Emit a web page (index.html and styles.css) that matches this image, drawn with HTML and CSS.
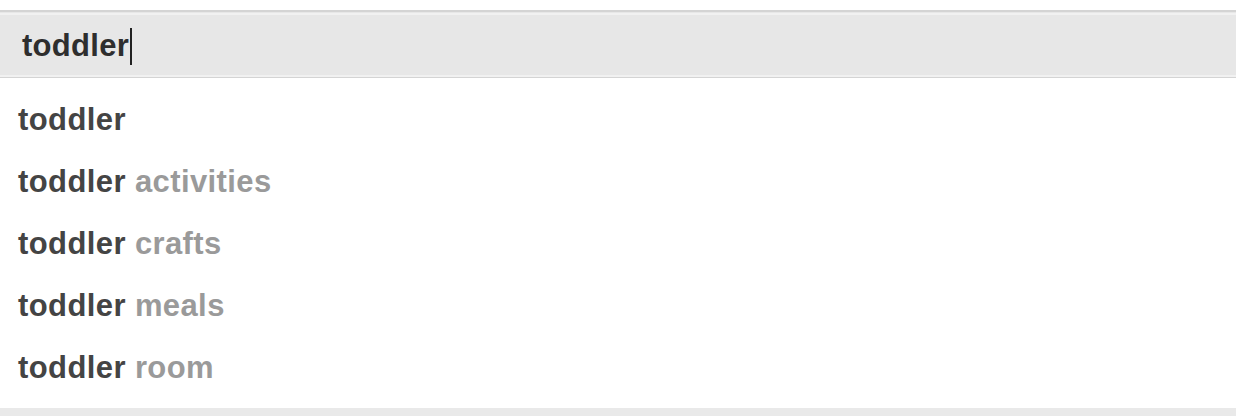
FILE: index.html
```html
<!DOCTYPE html>
<html>
<head>
<meta charset="utf-8">
<link rel="stylesheet" href="styles.css">
</head>
<body>
<div class="page">
  <div class="search">
    <div class="search-inner">
      <span class="query">toddler</span><span class="caret"></span>
    </div>
  </div>
  <ul class="suggestions">
    <li><b>toddler</b></li>
    <li><b>toddler</b> <span class="rest">activities</span></li>
    <li><b>toddler</b> <span class="rest">crafts</span></li>
    <li><b>toddler</b> <span class="rest">meals</span></li>
    <li><b>toddler</b> <span class="rest">room</span></li>
  </ul>
  <div class="footer"></div>
</div>
</body>
</html>
```
FILE: styles.css
```css
html, body {
  margin: 0;
  padding: 0;
  background: #ffffff;
}
.page {
  width: 1236px;
  height: 416px;
  display: flex;
  flex-direction: column;
  font-family: "Liberation Sans", Arial, sans-serif;
  padding-top: 10px;
  box-sizing: border-box;
}
.search {
  border-top: 2px solid #d4d4d4;
  border-bottom: 2px solid #d4d4d4;
  background: #e7e7e7;
  height: 68px;
  box-sizing: border-box;
  flex: none;
}
.search-inner {
  height: 100%;
  box-sizing: border-box;
  border-top: 2px solid #f1f1f1;
  border-bottom: 2px solid #f1f1f1;
  margin-top: 1px;
  display: flex;
  align-items: center;
  padding-left: 22px;
  padding-top: 2px;
}
.query {
  font-size: 31px;
  font-weight: bold;
  color: #2e2e2e;
  letter-spacing: 0.3px;
}
.caret {
  display: inline-block;
  width: 2px;
  height: 37px;
  background: #222;
  margin-left: 1px;
}
.suggestions {
  list-style: none;
  margin: 0;
  padding: 11px 0 0 18px;
  flex: 1;
}
.suggestions li {
  height: 62px;
  line-height: 62px;
  font-size: 31px;
  color: #444444;
  letter-spacing: 0.4px;
}
.suggestions b {
  font-weight: bold;
}
.rest {
  font-weight: bold;
  color: #9a9a9a;
}
.footer {
  height: 8px;
  background: #e9e9e9;
  flex: none;
}
```
